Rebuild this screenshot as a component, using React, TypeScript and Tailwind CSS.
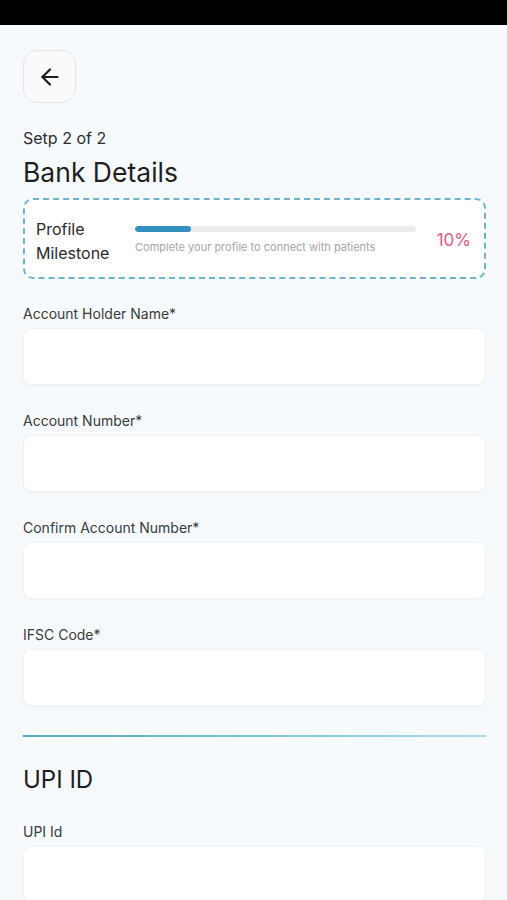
import React from "react";

function Field({ label, first }: { label: string; first?: boolean }) {
  return (
    <div className={first ? "mt-[25px]" : "mt-[26px]"}>
      <div className="text-[14px] leading-[20px] text-[#3a3a3a]">{label}</div>
      <div className="mt-[4px] h-[57px] rounded-[9px] bg-white shadow-[0_1px_3px_rgba(0,0,0,0.04)] border border-[#f0f3f6]" />
    </div>
  );
}

export default function App() {
  return (
    <div className="w-[507px] h-[900px] overflow-hidden bg-[#f7fafd]" style={{ fontFamily: "Inter, 'Noto Sans', sans-serif" }}>
      <div className="h-[25px] bg-black" />
      <div className="pl-[23px] pr-[21px] pt-[25px]">
        <button className="w-[53px] h-[53px] rounded-[14px] border border-[#e3e5e8] bg-[#f8fafc] flex items-center justify-center">
          <svg width="26" height="26" viewBox="0 0 24 24" fill="none" stroke="#1c1c1c" strokeWidth="2" strokeLinecap="round" strokeLinejoin="round">
            <path d="M19 12H5" />
            <path d="M12 19l-7-7 7-7" />
          </svg>
        </button>
        <div className="mt-[24px] text-[16px] leading-[22px] text-[#2e2e2e]">Setp 2 of 2</div>
        <div className="mt-[7px] text-[26.5px] leading-[32px] text-[#1f1f1f]">Bank Details</div>
        <div className="mt-[10px] h-[81px] rounded-[10px] border-2 border-dashed border-[#6cb3cf] bg-white flex items-center pl-[11px] pr-[13px] pt-[4px]">
          <div className="w-[99px] text-[16px] leading-[24px] text-[#2a2a2a]">
            <div>Profile</div>
            <div>Milestone</div>
          </div>
          <div className="flex-1 flex flex-col">
            <div className="h-[6px] rounded-full bg-[#ececec] overflow-hidden mt-[-2px]">
              <div className="h-full w-[20%] rounded-full bg-[#3391bf]" />
            </div>
            <div className="mt-[8px] text-[11px] leading-[14px] text-[#a6a6a6]">Complete your profile to connect with patients</div>
          </div>
          <div className="ml-[21px] text-[17px] text-[#e8587e]">10%</div>
        </div>
        <Field label="Account Holder Name*" first />
        <Field label="Account Number*" />
        <Field label="Confirm Account Number*" />
        <Field label="IFSC Code*" />
        <div className="mt-[29px] h-[2px] bg-gradient-to-r from-[#5aa8c3] to-[#a9def0]" />
        <div className="mt-[27px] text-[24px] leading-[32px] text-[#1f1f1f]">UPI ID</div>
        <Field label="UPI Id" />
      </div>
    </div>
  );
}
